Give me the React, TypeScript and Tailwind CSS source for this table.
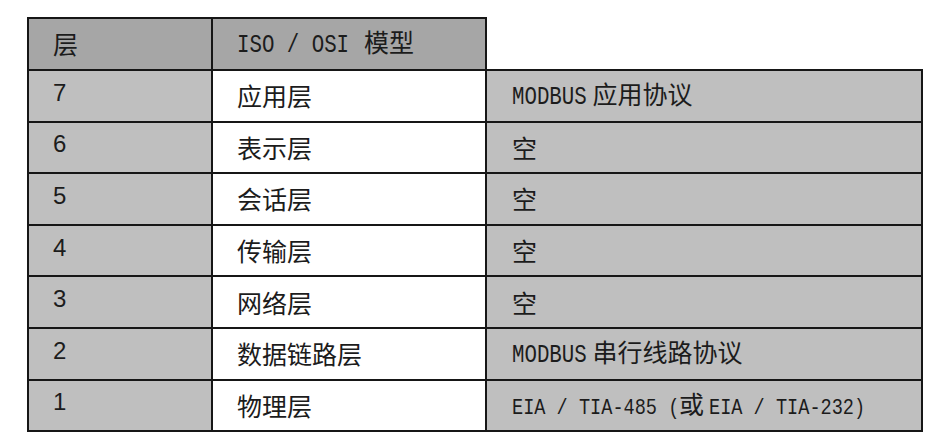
import React from 'react';

type Part = [kind: 'c' | 'm' | 'e1' | 'e2', text: string];

const rows: { n: string; layer: string; proto: Part[] }[] = [
  { n: '7', layer: '应用层', proto: [['m', 'MODBUS'], ['c', ' 应用协议']] },
  { n: '6', layer: '表示层', proto: [['c', '空']] },
  { n: '5', layer: '会话层', proto: [['c', '空']] },
  { n: '4', layer: '传输层', proto: [['c', '空']] },
  { n: '3', layer: '网络层', proto: [['c', '空']] },
  { n: '2', layer: '数据链路层', proto: [['m', 'MODBUS'], ['c', ' 串行线路协议']] },
  {
    n: '1',
    layer: '物理层',
    proto: [
      ['e1', 'EIA / TIA-485 ('],
      ['c', '或'],
      ['e2', 'EIA / TIA-232)'],
    ],
  },
];

const cjk = "font-['Noto_Sans_CJK_SC',sans-serif] text-[25px]";
const mono = "font-['Liberation_Mono',monospace] inline-block origin-left";

// latin text in the source is a narrow half-width serif, so squeeze the mono face
const latin: Record<string, string> = {
  m: `${mono} text-[25px] scale-x-[0.83] mr-[-15px]`,
  e1: `${mono} text-[22px] scale-x-[0.845] mr-[-31px]`,
  e2: `${mono} text-[22px] scale-x-[0.845] mr-[-29px] ml-[5px]`,
};

export default function App() {
  return (
    <div className="w-[950px] h-[447px] bg-white overflow-hidden pt-[17px] pl-[27px]">
      <table className="table-fixed border-collapse text-[#1c1c1c]">
        <colgroup>
          <col className="w-[184px]" />
          <col className="w-[274px]" />
          <col className="w-[436px]" />
        </colgroup>
        <tbody>
          <tr className="h-[52px]">
            <td className={`bg-[#a6a6a6] border-2 border-[#161616] pl-[24px] ${cjk}`}>层</td>
            <td className="bg-[#a6a6a6] border-2 border-[#161616] pl-[24px] whitespace-pre">
              <span className={`${mono} text-[25px] scale-x-[0.83] mr-[-23px]`}>ISO / OSI </span>
              <span className={cjk}>模型</span>
            </td>
            <td className="border-0"></td>
          </tr>
          {rows.map((r) => (
            <tr key={r.n} className="h-[51.6px]">
              <td className="bg-[#bfbfbf] border-2 border-[#161616] pl-[24px] pb-[6px] font-['Liberation_Sans',Arial,sans-serif] text-[24px] leading-none">
                {r.n}
              </td>
              <td className={`bg-white border-2 border-[#161616] pl-[24px] ${cjk} leading-none`}>{r.layer}</td>
              <td className="bg-[#bfbfbf] border-2 border-[#161616] pl-[25px] leading-none whitespace-pre">
                {r.proto.map(([k, t], i) =>
                  k === 'c' ? (
                    <span key={i} className={cjk}>{t}</span>
                  ) : (
                    <span key={i} className={latin[k]}>{t}</span>
                  )
                )}
              </td>
            </tr>
          ))}
        </tbody>
      </table>
    </div>
  );
}
